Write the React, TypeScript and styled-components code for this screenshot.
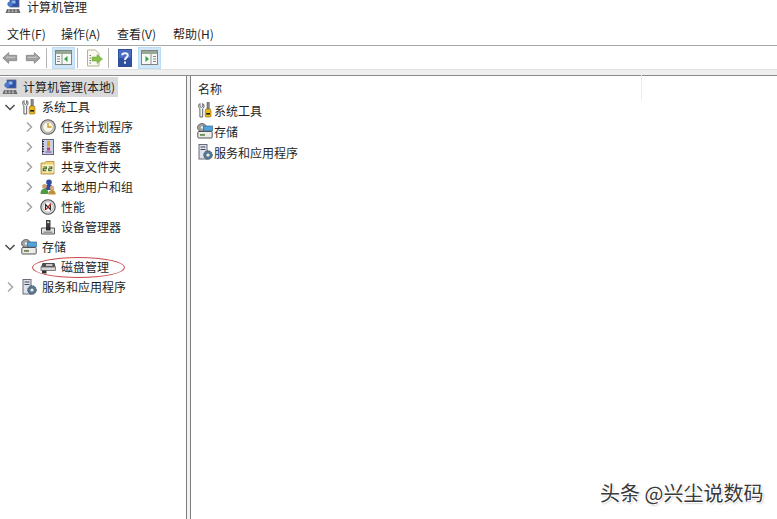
import React from "react";
import styled, { createGlobalStyle } from "styled-components";

const Global = createGlobalStyle`
  html, body { margin: 0; padding: 0; background: #fff; }
  body { font-family: "Noto Sans CJK SC", "Noto Sans", sans-serif; }
`;

const Page = styled.div`
  position: relative;
  width: 777px;
  height: 519px;
  overflow: hidden;
  display: flex;
  flex-direction: column;
  background: #fff;
  color: #1f1f1f;
  font-size: 12px;
`;
const TitleBar = styled.div`
  height: 22px;
  flex: none;
  display: flex;
  align-items: flex-start;
  gap: 6px;
  padding-left: 5px;
  box-sizing: border-box;
  line-height: 13px;
  svg { margin-top: -2px; }
`;
const MenuBar = styled.div`
  height: 23px;
  flex: none;
  display: flex;
  align-items: center;
  padding-left: 7px;
`;
const MenuItem = styled.span<{ $w: number }>`
  width: ${(p) => p.$w}px;
  line-height: 22px;
`;
const Toolbar = styled.div`
  height: 23px;
  flex: none;
  display: flex;
  align-items: center;
  border-top: 1px solid #a8a8a8;
  padding-left: 1px;
`;
const ToolButton = styled.div<{ $active?: boolean; $w: number; $ml?: number }>`
  width: ${(p) => p.$w}px;
  height: 22px;
  margin-left: ${(p) => p.$ml ?? 0}px;
  box-sizing: border-box;
  display: flex;
  align-items: center;
  justify-content: center;
  background: ${(p) => (p.$active ? "#cfe5f8" : "transparent")};
  border: 1px solid ${(p) => (p.$active ? "#bcdcf4" : "transparent")};
`;
const ToolSep = styled.div<{ $ml: number }>`
  width: 1px;
  height: 20px;
  margin-left: ${(p) => p.$ml}px;
  background: #b5b5b5;
`;
const Band = styled.div`
  height: 5px;
  flex: none;
  background: #efefef;
  border-top: 1px solid #e2e2e2;
  border-bottom: 1px solid #8a8a8a;
`;
const Panes = styled.div`
  flex: 1;
  min-height: 0;
  display: flex;
  background: #f3f3f7;
`;
const TreePane = styled.div`
  width: 186px;
  flex: none;
  background: #fff;
  border-right: 1px solid #7d7d7d;
  padding-top: 1px;
`;
const ListPane = styled.div`
  flex: 1;
  margin-left: 3px;
  background: #fff;
  border-left: 1px solid #7d7d7d;
`;
const Row = styled.div<{ $pad: number; $selected?: boolean }>`
  position: relative;
  height: 20px;
  box-sizing: border-box;
  display: flex;
  align-items: center;
  gap: 5px;
  padding: 0 3px 1px ${(p) => p.$pad}px;
  width: ${(p) => (p.$selected ? "fit-content" : "auto")};
  background: ${(p) => (p.$selected ? "#d9d9d9" : "transparent")};
  white-space: nowrap;
`;
const Ellipse = styled.div`
  position: absolute;
  left: 32px;
  top: 0;
  width: 91px;
  height: 19px;
  border: 1px solid #c9474c;
  border-radius: 50%;
`;
const ListHeader = styled.div`
  position: relative;
  height: 24px;
  display: flex;
  align-items: center;
  padding: 1px 0 0 7px;
  box-sizing: border-box;
`;
const HeaderDivider = styled.div`
  position: absolute;
  left: 450px;
  top: -3px;
  width: 1px;
  height: 27px;
  background: #ececec;
`;
const ListRow = styled.div`
  height: 21px;
  box-sizing: border-box;
  display: flex;
  align-items: center;
  gap: 1px;
  padding: 0 0 1px 6px;
  white-space: nowrap;
`;
const ListBody = styled.div``;
const Watermark = styled.div`
  position: absolute;
  left: 600px;
  top: 480px;
  font-size: 20px;
  line-height: 26px;
  color: #3a3a3a;
  white-space: nowrap;
  text-shadow: 1px 1px 0 #fff, -1px -1px 0 #fff, 1px -1px 0 #fff, -1px 1px 0 #fff, 1px 1px 2px #8a8a8a;
`;

const Chevron = ({ open }: { open?: boolean }) => (
  <svg width="12" height="12" viewBox="0 0 12 12" fill="none" stroke={open ? "#4a4a4a" : "#a6a6a6"} strokeWidth="1.5">
    {open ? <path d="M1.5 4 L6 8.5 L10.5 4" /> : <path d="M4 1.5 L8.5 6 L4 10.5" />}
  </svg>
);
const ChevronGap = () => <svg width="12" height="12" viewBox="0 0 12 12" />;

const I16 = ({ children }: { children: React.ReactNode }) => (
  <svg width="16" height="16" viewBox="0 0 16 16" style={{ flex: "none" }}>
    {children}
  </svg>
);

const ComputerIcon = () => (
  <I16>
    <rect x="5" y="1" width="9" height="8" fill="#2f4fa8" stroke="#5a6a8a" strokeWidth="0.8" />
    <rect x="6.5" y="2.5" width="4" height="3" fill="#8fb8ea" />
    <circle cx="5" cy="6" r="2.6" fill="#4a78c8" />
    <path d="M2 11 h12 l1.5 4 H0.5 Z" fill="#6d6d6d" />
    <path d="M3 12 h2 M6.5 12 h2 M10 12 h2 M3 13.7 h2 M6.5 13.7 h2 M10 13.7 h2" stroke="#d8d8d8" strokeWidth="0.8" />
  </I16>
);
const ToolsIcon = () => (
  <I16>
    <path d="M1.5 1.5 v3 l1.3 1 1.4 -1 v-3 a3 3 0 0 1 1.3 3 c0 1.1 -.7 1.8 -1.3 2.2 V15 h-2.8 V6.7 C.8 6.3 .1 5.6 .1 4.5 a3 3 0 0 1 1.4 -3 Z" transform="translate(1.5 0)" fill="#f4f4f4" stroke="#555" strokeWidth="0.9" />
    <rect x="10" y="0.5" width="2.2" height="6.5" fill="#8a8a8a" stroke="#4a4a4a" strokeWidth="0.5" />
    <path d="M8.8 7 h4.6 l.6 2 v5 a1 1 0 0 1 -1 1 h-3.8 a1 1 0 0 1 -1 -1 V9 Z" fill="#eab81f" stroke="#8a6a10" strokeWidth="0.6" />
    <rect x="9.2" y="11" width="3.8" height="1.6" fill="#1f1f1f" />
  </I16>
);
const ClockIcon = () => (
  <I16>
    <circle cx="8" cy="8" r="7.3" fill="#c9c9c4" stroke="#5f5f5f" strokeWidth="1.1" />
    <circle cx="8" cy="8" r="5.3" fill="#fbf7e4" stroke="#9a9a9a" strokeWidth="0.6" />
    <path d="M8 4 V8 H11.5" fill="none" stroke="#c79a2a" strokeWidth="1.4" />
  </I16>
);
const EventIcon = () => (
  <I16>
    <rect x="2.5" y="0.5" width="11" height="15" fill="#c9cfe6" stroke="#5f6478" strokeWidth="1" />
    <path d="M2 2.5 h2 M2 5 h2 M2 7.5 h2 M2 10 h2 M2 12.5 h2" stroke="#222" strokeWidth="1" />
    <rect x="7" y="2" width="3" height="5.5" fill="#e0a818" />
    <rect x="7" y="8.5" width="3" height="3" fill="#c03a6a" />
    <path d="M5.5 13 h6" stroke="#8a6ab0" strokeWidth="1.4" />
  </I16>
);
const ShareIcon = () => (
  <I16>
    <path d="M1 4 h4 l1 -1.5 h8 V15 H1 Z" fill="#f0d070" stroke="#a78a3a" strokeWidth="0.8" />
    <rect x="2.5" y="5.5" width="11" height="8" fill="#fbf3c8" />
    <path d="M3.3 8 h3 v1.7 h-3 v2 h3 M8.8 8 h3 v1.7 h-3 v2 h3" fill="none" stroke="#2f5a22" strokeWidth="1.1" />
  </I16>
);
const UsersIcon = () => (
  <I16>
    <circle cx="9" cy="3.2" r="2.8" fill="#2f4aa0" />
    <path d="M4.5 11 c0-4 2-5.3 4.5-5.3 s4.5 1.3 4.5 5.3 Z" fill="#2f4aa0" />
    <circle cx="4.5" cy="7.5" r="2.4" fill="#cf9f6f" />
    <path d="M0.5 15 c0-3.8 1.8-5.2 4-5.2 s4 1.4 4 5.2 Z" fill="#4f9a46" />
    <circle cx="12" cy="9" r="2.2" fill="#d8a878" />
    <path d="M8.3 15.5 c0-3 1.5-4.5 3.7-4.5 s3.7 1.5 3.7 4.5 Z" fill="#b9923a" />
  </I16>
);
const PerfIcon = () => (
  <I16>
    <circle cx="8" cy="8" r="7.2" fill="#dedede" stroke="#4f4f4f" strokeWidth="1.1" />
    <circle cx="8" cy="8" r="5.2" fill="#fff" stroke="#9a9a9a" strokeWidth="0.6" />
    <path d="M5.5 11 V5.5 L10.5 10.5 V5" fill="none" stroke="#2a2a2a" strokeWidth="1.2" />
    <path d="M6 10.5 L11 4.5" stroke="#c8342a" strokeWidth="1.2" />
  </I16>
);
const DeviceIcon = () => (
  <I16>
    <rect x="6" y="1" width="4.5" height="7" fill="#3f3f3f" />
    <rect x="7.2" y="2.5" width="2" height="1.6" fill="#e8e8e8" />
    <path d="M1.5 9 h13 v6 H1.5 Z" fill="#e4e4e4" stroke="#555" strokeWidth="1" />
    <rect x="6" y="8" width="4.5" height="3.5" fill="#2e2e2e" />
    <rect x="3.5" y="12.5" width="9" height="1.4" fill="#8f8f8f" />
  </I16>
);
const StorageIcon = () => (
  <I16>
    <ellipse cx="5" cy="4.5" rx="4.5" ry="4" fill="#a0a0a0" stroke="#555" strokeWidth="0.8" />
    <circle cx="5" cy="4.5" r="1.2" fill="#eee" />
    <rect x="6.5" y="3" width="9" height="5" fill="#4fa3d8" stroke="#376a96" strokeWidth="0.7" />
    <rect x="0.8" y="8.5" width="14.4" height="6.5" rx="1" fill="#ebebeb" stroke="#555" strokeWidth="1" />
    <rect x="3" y="11" width="5" height="1.8" fill="#6f8a4a" />
  </I16>
);
const DiskIcon = () => (
  <I16>
    <path d="M2.5 4 h12 l1 4.2 H1 Z" fill="#4f4f4f" />
    <rect x="6" y="5.2" width="6.5" height="1.6" fill="#e6e6e6" />
    <rect x="1" y="8" width="14.5" height="3.5" fill="#d6d6d6" stroke="#666" strokeWidth="0.8" />
    <rect x="2" y="11.5" width="4.5" height="3" fill="#333" />
  </I16>
);
const ServicesIcon = () => (
  <I16>
    <rect x="2" y="0.5" width="8" height="14.5" fill="#dfe2ea" stroke="#666b78" strokeWidth="1" />
    <path d="M3.5 3 h5 M3.5 5.5 h5" stroke="#44495a" strokeWidth="1.2" />
    <circle cx="11" cy="11" r="4.3" fill="#58788f" stroke="#34485a" strokeWidth="0.9" strokeDasharray="1.6 0.7" />
    <circle cx="11" cy="11" r="1.6" fill="#e8eef4" />
  </I16>
);

const ArrowIcon = ({ flip }: { flip?: boolean }) => (
  <svg width="17" height="14" viewBox="0 0 18 14" style={flip ? { transform: "scaleX(-1)" } : undefined}>
    <path d="M1 7 L7.5 1 V4 H16.5 V10 H7.5 V13 Z" fill="#a0a0a0" stroke="#8a8a8a" strokeWidth="1" strokeLinejoin="round" />
    <path d="M3.5 7 L7 4.5 V5.5 H15 V7 Z" fill="#c4c4c4" />
  </svg>
);
const PaneIcon = ({ right }: { right?: boolean }) => (
  <svg width="17" height="15" viewBox="0 0 17 15">
    <rect x="0.5" y="0.5" width="16" height="14" fill="#f5f8f4" stroke="#7c867c" />
    <rect x="1" y="1" width="15" height="3" fill="#98a898" />
    {right ? (
      <>
        <path d="M10 4 V14" stroke="#8a948a" strokeWidth="1" />
        <path d="M12 6.5 h3 M12 9 h3 M12 11.5 h3" stroke="#7a7a7a" strokeWidth="0.9" />
        <path d="M4.5 6 L8 9 L4.5 12 Z" fill="#35a046" />
      </>
    ) : (
      <>
        <path d="M7 4 V14" stroke="#8a948a" strokeWidth="1" />
        <path d="M2 6.5 h3 M2 9 h3 M2 11.5 h3" stroke="#7a7a7a" strokeWidth="0.9" />
        <path d="M12.5 6 L9 9 L12.5 12 Z" fill="#35a046" />
      </>
    )}
  </svg>
);
const ExportIcon = () => (
  <svg width="17" height="18" viewBox="0 0 17 18">
    <path d="M1.5 1 h8 l3.5 3.5 V17 H1.5 Z" fill="#fbfaf0" stroke="#b8b190" />
    <path d="M3.5 6.5 h1.5 M3.5 9 h1.5 M3.5 11.5 h1.5 M3.5 14 h1.5" stroke="#777" strokeWidth="1" />
    <path d="M6 8 h5 V5.5 L16.5 10 L11 14.5 V12 H6 Z" fill="#86c04a" stroke="#68a334" strokeWidth="0.5" />
  </svg>
);
const HelpIcon = () => (
  <svg width="14" height="18" viewBox="0 0 14 18">
    <rect width="14" height="18" fill="#2f4f9f" />
    <rect x="1" y="1" width="12" height="8" fill="#4a6cc0" />
    <path d="M4.2 6.2 C4.2 3.8 9.8 3.2 9.8 6.2 C9.8 8.4 7 8.4 7 11" fill="none" stroke="#f2f4ff" strokeWidth="2" />
    <rect x="6" y="12.5" width="2" height="2.2" fill="#f2f4ff" />
  </svg>
);

const tools: [React.ReactNode, string][] = [
  [<ClockIcon />, "任务计划程序"],
  [<EventIcon />, "事件查看器"],
  [<ShareIcon />, "共享文件夹"],
  [<UsersIcon />, "本地用户和组"],
  [<PerfIcon />, "性能"],
];

export default function App() {
  return (
    <Page>
      <Global />
      <TitleBar>
        <ComputerIcon />
        <span>计算机管理</span>
      </TitleBar>
      <MenuBar>
        <MenuItem $w={54}>文件(F)</MenuItem>
        <MenuItem $w={56}>操作(A)</MenuItem>
        <MenuItem $w={56}>查看(V)</MenuItem>
        <MenuItem $w={50}>帮助(H)</MenuItem>
      </MenuBar>
      <Toolbar>
        <ToolButton $w={18}><ArrowIcon /></ToolButton>
        <ToolButton $w={18} $ml={5}><ArrowIcon flip /></ToolButton>
        <ToolSep $ml={4} />
        <ToolButton $w={23} $ml={5} $active><PaneIcon /></ToolButton>
        <ToolSep $ml={2} />
        <ToolButton $w={19} $ml={7}><ExportIcon /></ToolButton>
        <ToolSep $ml={4} />
        <ToolButton $w={16} $ml={8}><HelpIcon /></ToolButton>
        <ToolButton $w={23} $ml={5} $active><PaneIcon right /></ToolButton>
      </Toolbar>
      <Band />
      <Panes>
        <TreePane>
          <Row $pad={2} $selected><ComputerIcon />计算机管理(本地)</Row>
          <Row $pad={4}><Chevron open /><ToolsIcon />系统工具</Row>
          {tools.map(([icon, label]) => (
            <Row $pad={23} key={label}><Chevron />{icon}{label}</Row>
          ))}
          <Row $pad={23}><ChevronGap /><DeviceIcon />设备管理器</Row>
          <Row $pad={4}><Chevron open /><StorageIcon />存储</Row>
          <Row $pad={23}><ChevronGap /><DiskIcon />磁盘管理<Ellipse /></Row>
          <Row $pad={4}><Chevron /><ServicesIcon />服务和应用程序</Row>
        </TreePane>
        <ListPane>
          <ListHeader>名称<HeaderDivider /></ListHeader>
          <ListBody>
            <ListRow><ToolsIcon />系统工具</ListRow>
            <ListRow><StorageIcon />存储</ListRow>
            <ListRow><ServicesIcon />服务和应用程序</ListRow>
          </ListBody>
        </ListPane>
      </Panes>
      <Watermark>头条 @兴尘说数码</Watermark>
    </Page>
  );
}
